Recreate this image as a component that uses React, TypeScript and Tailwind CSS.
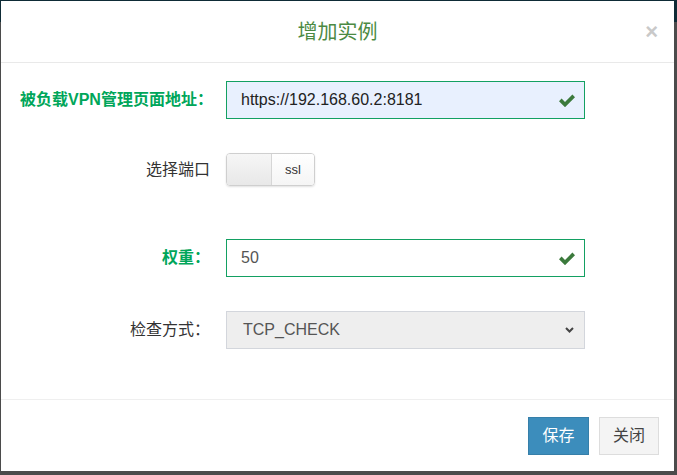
import React from 'react'

const font = { fontFamily: '"Liberation Sans", "Noto Sans CJK SC", sans-serif' }

function OkIcon() {
  return (
    <svg className="w-[16px] h-[13px] text-[#3b7a3c]" viewBox="0 0 16 13" fill="currentColor">
      <path d="M0 7.2 L2.6 4.6 L6 8 L13.4 0.6 L16 3.2 L6 13.2 Z" />
    </svg>
  )
}

function FormRow({ label, labelClass, children, className }: any) {
  return (
    <div className={`flex items-center ${className}`}>
      <label className={`w-[190px] shrink-0 text-right whitespace-nowrap text-[16px] ${labelClass}`}>{label}</label>
      <div className="ml-[16px] w-[359px]">{children}</div>
    </div>
  )
}

export default function App() {
  return (
    <div
      className="w-[677px] h-[475px] pt-[1px] pl-[1px] pr-[3px] pb-[4px] bg-[linear-gradient(#0e2b36_0,#0e2b36_22px,#4b4b4b_22px)]"
      style={font}
    >
      <div className="w-[673px] h-[470px] bg-white flex flex-col">
        {/* header */}
        <div className="h-[62px] border-b border-[#e9e9e9] grid grid-cols-[1fr_auto_1fr] items-center">
          <div />
          <h4 className="text-[20px] text-[#4c8a43] leading-none">增加实例</h4>
          <button className="justify-self-end mr-[16px] text-[22px] font-bold leading-none text-[#c9c9c9]">×</button>
        </div>

        {/* body */}
        <div className="pt-[18px] pl-[19px] h-[336px]">
          <FormRow label="被负载VPN管理页面地址：" labelClass="font-bold text-[#00a65a]">
            <div className="h-[38px] border border-[#13a062] bg-[#e8f0fe] flex items-center justify-between pl-[14px] pr-[9px]">
              <span className="text-[16px] text-[#222]">https://192.168.60.2:8181</span>
              <OkIcon />
            </div>
          </FormRow>

          <FormRow label="选择端口" labelClass="text-[#333]" className="mt-[34px]">
            <div className="w-[89px] h-[33px] rounded-[4px] border border-[#cfcfcf] shadow-[0_1px_2px_rgba(0,0,0,0.12)] flex overflow-hidden">
              <div className="w-[45px] h-full bg-[linear-gradient(#f6f6f6,#e8e8e8)] border-r border-[#d6d6d6]" />
              <div className="flex-1 flex items-center justify-center bg-[linear-gradient(#ffffff,#f5f5f5)] text-[13px] text-[#333]">ssl</div>
            </div>
          </FormRow>

          <FormRow label="权重：" labelClass="font-bold text-[#00a65a]" className="mt-[53px]">
            <div className="h-[38px] border border-[#13a062] bg-white flex items-center justify-between pl-[14px] pr-[9px]">
              <span className="text-[16px] text-[#555]">50</span>
              <OkIcon />
            </div>
          </FormRow>

          <FormRow label="检查方式：" labelClass="text-[#333]" className="mt-[34px]">
            <div className="h-[38px] border border-[#d3d6dc] bg-[#eeeeee] flex items-center justify-between pl-[16px] pr-[10px]">
              <span className="text-[16px] text-[#555]">TCP_CHECK</span>
              <svg className="w-[9px] h-[6px] text-[#444]" viewBox="0 0 9 6" fill="none" stroke="currentColor" strokeWidth="2">
                <path d="M1 1 L4.5 4.5 L8 1" />
              </svg>
            </div>
          </FormRow>
        </div>

        {/* footer */}
        <div className="border-t border-[#efefef] flex-1 flex justify-end items-start pt-[17px] pr-[15px] gap-[10px]">
          <button className="w-[61px] h-[38px] bg-[#3c8dbc] border border-[#367fa9] text-white text-[16px]">保存</button>
          <button className="w-[60px] h-[38px] bg-[#f4f4f4] border border-[#dddddd] text-[#444] text-[16px]">关闭</button>
        </div>
      </div>
    </div>
  )
}
